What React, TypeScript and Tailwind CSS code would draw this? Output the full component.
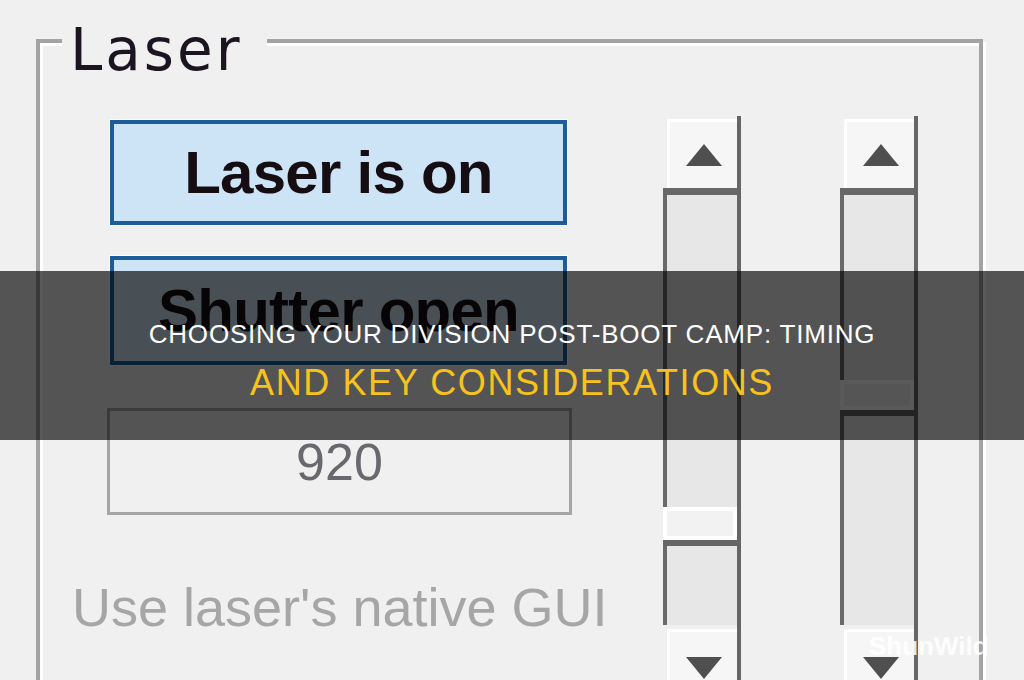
import React from 'react';

// Classic Win32-style "Laser" control group with a title strip laid over it.

function Arrow({ dir }: { dir: 'up' | 'down' }) {
  return (
    <svg width="36" height="22" viewBox="0 0 36 22" className="block">
      {dir === 'up' ? (
        <polygon points="18,0 36,22 0,22" fill="#4f4f4f" />
      ) : (
        <polygon points="0,0 36,0 18,22" fill="#4f4f4f" />
      )}
    </svg>
  );
}

function ScrollBar({ upper, thumb, lower }: { upper: number; thumb: number; lower: number }) {
  return (
    <div className="w-[78px] flex flex-col border-r-[4px] border-[#666666]">
      {/* up button */}
      <div className="h-[79px] border-b-[7px] border-[#686868] pl-[4px] pt-[3px]">
        <div className="h-full bg-[#f6f6f6] border-t-[3px] border-l-[3px] border-white flex items-center justify-center">
          <Arrow dir="up" />
        </div>
      </div>
      {/* track above thumb */}
      <div className="border-l-[4px] border-[#6a6a6a] bg-[#e7e7e7]" style={{ height: upper }} />
      {/* thumb */}
      <div className="border-b-[6px] border-[#666666] bg-white p-[4px]" style={{ height: thumb }}>
        <div className="h-full bg-[#f2f2f2]" />
      </div>
      {/* track below thumb */}
      <div className="border-l-[4px] border-[#6a6a6a] bg-[#e7e7e7]" style={{ height: lower }} />
      {/* down button */}
      <div className="h-[79px] pl-[4px] pt-[4px]">
        <div className="h-full bg-[#f6f6f6] border-t-[3px] border-l-[3px] border-white flex justify-center pt-[25px]">
          <Arrow dir="down" />
        </div>
      </div>
    </div>
  );
}

export default function App() {
  return (
    <div className="relative w-[1024px] h-[680px] overflow-hidden bg-[#f0f0f0] font-['Liberation_Sans',Arial,sans-serif]">
      <div className="pt-[39px] pl-[36px]">
        {/* group box */}
        <div className="relative w-[947px] h-[700px] border-4 border-[#a3a3a3] shadow-[inset_3px_3px_0_#ffffff,3px_3px_0_#ffffff]">
          <div className="absolute -top-[22px] left-[22px] bg-[#f0f0f0] pl-[8px] pr-[24px] font-['DejaVu_Sans',sans-serif] text-[58px] leading-none tracking-[3px] text-[#1c1420]">
            Laser
          </div>

          <div className="flex items-start pt-[73px] pl-[70px]">
            <div className="w-[457px] mt-[4px] flex flex-col">
              <div className="h-[105px] border-4 border-[#1b5d9b] bg-[#cde4f7] shadow-[0_0_0_1px_#ffffff] flex items-center justify-center text-[60px] leading-none font-bold tracking-[-0.75px] text-[#150d12]">
                Laser is on
              </div>
              <div className="h-[109px] mt-[31px] border-4 border-[#1b5d9b] bg-[#cde4f7] shadow-[0_0_0_1px_#ffffff] flex items-center justify-center text-[60px] leading-none font-bold tracking-[-0.75px] text-[#150d12]">
                Shutter open
              </div>
              <div className="h-[107px] w-[465px] -ml-[3px] mt-[43px] border-[3px] border-[#a6a6a6] flex items-center justify-center text-[52px] leading-none text-[#68686e]">
                920
              </div>
              <div className="mt-[65px] -ml-[38px] whitespace-nowrap text-[54px] leading-none text-[#a6a6a6]">
                Use laser's native GUI
              </div>
            </div>

            <div className="ml-[96px]">
              <ScrollBar upper={312} thumb={39} lower={79} />
            </div>
            <div className="ml-[99px]">
              <ScrollBar upper={185} thumb={36} lower={209} />
            </div>
          </div>
        </div>
      </div>

      {/* title strip */}
      <div className="absolute left-0 right-0 top-[271px] h-[169px] bg-black/65 flex flex-col items-center pt-[50px]">
        <p className="text-[26px] leading-none tracking-[0.8px] text-white whitespace-nowrap">
          CHOOSING YOUR DIVISION POST-BOOT CAMP: TIMING
        </p>
        <p className="mt-[18px] text-[36px] leading-none tracking-[1.6px] text-[#f6c21e] whitespace-nowrap">
          AND KEY CONSIDERATIONS
        </p>
      </div>

      <div className="absolute left-[869px] top-[633px] text-[26px] leading-none font-bold text-white/85">
        ShunWild
      </div>
    </div>
  );
}
